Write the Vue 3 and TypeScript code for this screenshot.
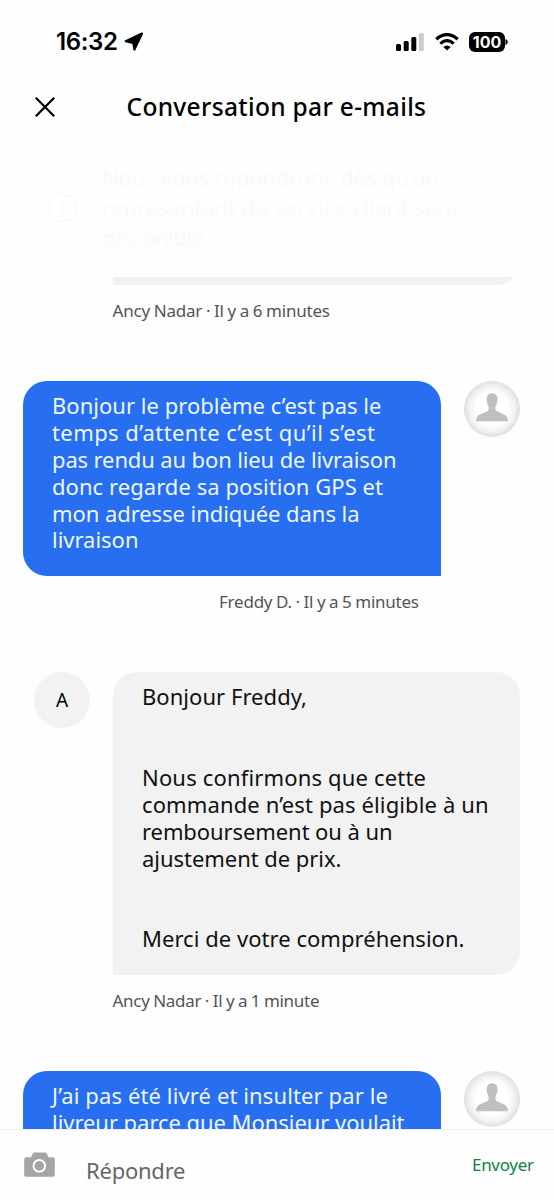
<script setup lang="ts">
import type { Directive } from 'vue'

interface Line {
  text: string
  width?: number
}

interface Message {
  id: number
  mine: boolean
  lines: Line[]
  caption?: Line
}

// Tracks a single line of text so that its last glyph ends at the given width.
const vFit: Directive<HTMLElement, number | undefined> = {
  mounted(el, { value }) {
    const count = (el.textContent ?? '').length
    if (!value || count < 2) return
    const natural = el.getBoundingClientRect().width
    const spacing = (value - natural) / (count - 1)
    el.style.letterSpacing = `${spacing.toFixed(3)}px`
    el.style.marginRight = `${(-spacing).toFixed(3)}px`
  },
}

const notice: Line[] = [
  { text: 'Nous vous répondrons dès qu’un', width: 337 },
  { text: 'représentant du service client sera', width: 356 },
  { text: 'disponible.', width: 107 },
]

const messages: Message[] = [
  {
    id: 1,
    mine: true,
    lines: [
      { text: 'Bonjour le problème c’est pas le', width: 329.5 },
      { text: 'temps d’attente c’est qu’il s’est', width: 323 },
      { text: 'pas rendu au bon lieu de livraison', width: 344.5 },
      { text: 'donc regarde sa position GPS et', width: 331 },
      { text: 'mon adresse indiquée dans la', width: 307.5 },
      { text: 'livraison', width: 86.5 },
    ],
    caption: { text: 'Freddy D. · Il y a 5 minutes', width: 200 },
  },
  {
    id: 2,
    mine: false,
    lines: [
      { text: 'Bonjour Freddy,', width: 165 },
      { text: '' },
      { text: '' },
      { text: 'Nous confirmons que cette', width: 284 },
      { text: 'commande n’est pas éligible à un', width: 346.5 },
      { text: 'remboursement ou à un', width: 250.5 },
      { text: 'ajustement de prix.', width: 199.5 },
      { text: '' },
      { text: '' },
      { text: 'Merci de votre compréhension.', width: 322.5 },
    ],
    caption: { text: 'Ancy Nadar · Il y a 1 minute', width: 207 },
  },
  {
    id: 3,
    mine: true,
    lines: [
      { text: 'J’ai pas été livré et insulter par le', width: 336 },
      { text: 'livreur parce que Monsieur voulait', width: 352.5 },
      { text: '' },
    ],
  },
]
</script>

<template>
  <div class="screen">
    <div class="status">
      <span class="clock"><span v-fit="62">16:32</span></span>
      <svg class="locate" width="20" height="20" viewBox="0 0 20 20">
        <path d="M1.700 9.200 18 1.600 10.400 17.600 9.300 10.800z" stroke="#000" stroke-width="2.200" stroke-linejoin="round" />
      </svg>
      <svg class="signal" width="28" height="18" viewBox="0 0 28 18">
        <rect x="0" y="11" width="5" height="7" rx="1.500" />
        <rect x="7.700" y="8" width="5" height="10" rx="1.500" />
        <rect x="15.300" y="4" width="5" height="14" rx="1.500" />
        <rect class="weak" x="22.800" y="0" width="5" height="18" rx="1.500" />
      </svg>
      <svg class="wifi" width="24" height="18" viewBox="0 0 24 18">
        <path d="M1.300 6.300Q12-3 22.700 6.300" fill="none" stroke="#000" stroke-width="3.300" />
        <path d="M5.300 10.600Q12 4.800 18.700 10.600" fill="none" stroke="#000" stroke-width="3.200" />
        <path d="M8.300 13.900Q12 10.900 15.700 13.900L12 17.600z" />
      </svg>
      <span class="battery">100</span>
      <svg class="cap" width="3" height="8" viewBox="0 0 3 8"><path d="M.5.800Q2.800 2 2.800 4T.5 7.200z" /></svg>
    </div>

    <header class="header">
      <svg class="close" width="20" height="20" viewBox="0 0 20 20">
        <path d="M.8.800 19.200 19.200M19.200.800.800 19.200" fill="none" stroke="#000" stroke-width="2.200" />
      </svg>
      <h1 class="title"><span v-fit="299.5">Conversation par e-mails</span></h1>
    </header>

    <section class="notice">
      <svg width="30" height="30" viewBox="0 0 30 30">
        <circle cx="15" cy="15" r="13.800" fill="none" stroke="#fafafa" stroke-width="2.200" />
        <path d="M15 7v3M12 13h3v9" fill="none" stroke="#fafafa" stroke-width="2.200" />
      </svg>
      <div class="notice-text">
        <div v-for="line in notice" :key="line.text" class="notice-line">
          <span v-fit="line.width">{{ line.text }}</span>
        </div>
      </div>
    </section>

    <main class="thread">
      <div class="peek"><div class="peek-bubble"></div></div>
      <div class="caption first"><span v-fit="217.5">Ancy Nadar · Il y a 6 minutes</span></div>

      <article v-for="m in messages" :key="m.id" class="message" :class="m.mine ? 'mine' : 'theirs'">
        <div class="row">
          <div v-if="!m.mine" class="avatar letter">A</div>
          <div class="bubble">
            <div v-for="(line, i) in m.lines" :key="i" class="line">
              <span v-fit="line.width">{{ line.text }}</span>
            </div>
          </div>
          <div v-if="m.mine" class="avatar person">
            <svg width="32" height="29" viewBox="0 0 32 29">
              <path d="M16.200.3C12.300.3 10.300 3.200 10.700 7c.2 2.500.800 4.200 1.700 6 .5 1.400.5 3.200-.2 4.400-2 1.900-7.400 2.900-10.100 5.100C.4 24 .2 26 .1 28.300h31.800c0-2.300-.4-4.300-2.200-5.800-2.700-2.200-7.700-3.200-9.700-5.100-.8-1.200-.7-3-.2-4.400.9-1.800 1.500-3.500 1.700-6C21.900 3.200 20.100.3 16.200.3z" fill="#bfbfbf" />
            </svg>
          </div>
        </div>
        <div v-if="m.caption" class="caption"><span v-fit="m.caption.width">{{ m.caption.text }}</span></div>
      </article>
    </main>

    <footer class="composer">
      <svg class="camera" width="32" height="26" viewBox="0 0 32 26">
        <path d="M2.200 5.200H7L8.800 1.700Q9.300.5 10.700.5h10.100q1.400 0 1.900 1.200l1.800 3.500h4.300q2 0 2 2v15.600q0 2-2 2H2.200q-2 0-2-2V7.200q0-2 2-2z" fill="#a6a5a6" />
        <circle cx="15.300" cy="13.900" r="5.800" fill="none" stroke="#fff" stroke-width="2" />
      </svg>
      <span class="reply"><span v-fit="99.500">Répondre</span></span>
      <span class="send"><span v-fit="62">Envoyer</span></span>
    </footer>
  </div>
</template>

<style>
body {
  margin: 0;
  background: #fefefe;
}
</style>

<style scoped>
.screen {
  display: flex;
  flex-direction: column;
  width: 554px;
  height: 1200px;
  overflow: hidden;
  background: #fefefe;
  color: #000;
  font-family: 'Noto Sans', 'Liberation Sans', sans-serif;
  white-space: nowrap;
}
svg {
  display: block;
  flex: none;
}
.status {
  display: flex;
  flex: none;
  align-items: center;
  height: 83px;
  padding: 0 46px 0 56px;
  box-sizing: border-box;
}
.clock {
  width: 68px;
  font: 600 24px/30px Inter, sans-serif;
}
.signal {
  margin-left: auto;
}
.weak {
  fill: #ccc;
}
.wifi {
  margin: 0 10px 0 11px;
}
.battery {
  width: 36px;
  height: 20px;
  border-radius: 6px;
  background: #000;
  color: #fff;
  font: 700 16px/20px Inter, sans-serif;
  text-align: center;
}
.header {
  display: flex;
  flex: none;
  align-items: center;
  height: 48px;
  padding-left: 35px;
}
.title {
  margin: -1px 0 0 71.5px;
  font-size: 24.5px;
  font-weight: 500;
  line-height: 30px;
}
.notice {
  display: flex;
  flex: none;
  align-items: center;
  gap: 25px;
  height: 146px;
  padding: 8px 0 0 47px;
  box-sizing: border-box;
  color: #fafafa;
}
.notice-text {
  margin-top: -2px;
}
.notice-line {
  font-size: 22px;
  line-height: 30px;
}
.thread {
  flex: 1;
  min-height: 0;
  overflow: hidden;
}
.peek {
  display: flex;
  align-items: flex-end;
  height: 8px;
  padding: 0 34px 0 113px;
  overflow: hidden;
}
.peek-bubble {
  flex: 1;
  height: 60px;
  border-radius: 24px 24px 24px 0;
  background: #f2f2f2;
}
.caption {
  height: 20px;
  margin-top: 16px;
  padding-left: 112.5px;
  color: #545454;
  font-size: 17px;
  line-height: 20px;
  word-spacing: -0.5px;
}
.mine .caption {
  padding: 0 135px 0 0;
  text-align: right;
}
.message {
  margin-top: 60px;
}
.row {
  display: flex;
  gap: 23px;
}
.mine .row {
  padding-left: 23px;
}
.theirs .row {
  padding-left: 34px;
}
.bubble {
  box-sizing: border-box;
  padding: 11px 30px 23px 29px;
  font-size: 22px;
  line-height: 26.900px;
}
.mine .bubble {
  width: 418px;
  border-radius: 24px 24px 0 24px;
  background: #276ef1;
  color: #eef6ff;
}
.theirs .bubble {
  width: 407px;
  border-radius: 24px 24px 24px 0;
  background: #f2f2f2;
  color: #111;
}
.line {
  height: 26.900px;
}
.avatar {
  display: flex;
  flex: none;
  align-items: center;
  justify-content: center;
  width: 56px;
  height: 56px;
  border-radius: 50%;
}
.letter {
  background: #f2f2f2;
  font-size: 19px;
}
.person {
  box-sizing: border-box;
  padding-bottom: 4px;
  background: radial-gradient(circle, #fff 40%, #f3f3f3 56%, #dfdfdf 71%);
}
.composer {
  display: flex;
  flex: none;
  align-items: flex-start;
  height: 71px;
  padding: 0 20px 0 24px;
  border-top: 1.500px solid #eee;
  box-sizing: border-box;
}
.camera {
  margin-top: 22px;
}
.reply {
  margin: 26px 0 0 30px;
  color: #666;
  font-size: 22px;
  line-height: 28px;
}
.send {
  margin: 25px 0 0 auto;
  color: #0e8345;
  font-size: 17px;
  line-height: 20px;
}
</style>
